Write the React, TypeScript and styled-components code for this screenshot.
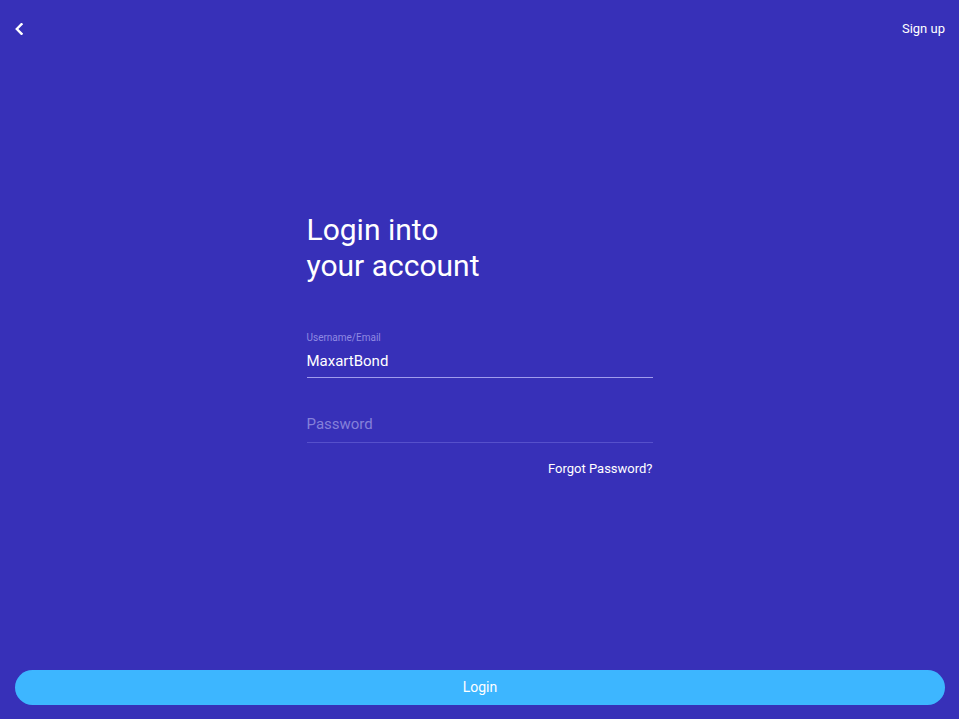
import React from "react";
import styled, { createGlobalStyle } from "styled-components";

const Global = createGlobalStyle`
  * { box-sizing: border-box; }
  html, body { margin: 0; padding: 0; height: 100%; }
  body {
    background: #3730b8;
    font-family: Roboto, "Liberation Sans", Arial, sans-serif;
    color: #ffffff;
  }
  #root { min-height: 100vh; }
`;

const Page = styled.div`
  min-height: 100vh;
  display: flex;
  flex-direction: column;
  background: #3730b8;
`;

const Header = styled.header`
  height: 57px;
  display: flex;
  align-items: center;
  justify-content: space-between;
  padding: 0 14px 0 15px;
`;

const BackButton = styled.button`
  display: flex;
  align-items: center;
  justify-content: center;
  padding: 0;
  margin: 0;
  border: none;
  background: transparent;
  color: #ffffff;
  cursor: pointer;
  width: 8px;
  height: 12px;
`;

const HeaderLink = styled.a`
  font-size: 13px;
  line-height: 16px;
  color: #ffffff;
  text-decoration: none;
`;

const Main = styled.main`
  flex: 1;
  display: flex;
  justify-content: center;
  padding-top: 155px;
`;

const Form = styled.form`
  width: 346px;
  display: flex;
  flex-direction: column;
`;

const Title = styled.h1`
  margin: 0 0 48px;
  font-size: 30px;
  line-height: 36px;
  font-weight: 400;
  color: #ffffff;
`;

const Field = styled.label<{ $gap: number }>`
  display: flex;
  flex-direction: column;
  margin-top: ${(p) => p.$gap}px;
`;

const FieldLabel = styled.span`
  font-size: 10px;
  line-height: 12px;
  color: #8f8ae2;
  margin-bottom: 8px;
`;

const Input = styled.input<{ $active?: boolean; $pb: number }>`
  font-family: inherit;
  font-size: 15px;
  line-height: 18px;
  height: ${(p) => 18 + p.$pb + 1}px;
  padding: 0 0 ${(p) => p.$pb}px;
  margin: 0;
  border: none;
  border-bottom: 1px solid ${(p) => (p.$active ? "#a09ced" : "#5650cb")};
  background: transparent;
  color: #ffffff;
  outline: none;
  &::placeholder {
    color: #8580da;
  }
`;

const Forgot = styled.a`
  align-self: flex-end;
  margin-top: 18px;
  font-size: 13px;
  line-height: 16px;
  color: #ffffff;
  text-decoration: none;
`;

const Footer = styled.footer`
  padding: 0 14px 14px 15px;
`;

const PrimaryButton = styled.button`
  width: 100%;
  height: 35px;
  border: none;
  border-radius: 18px;
  background: #3db6ff;
  color: #ffffff;
  font-family: inherit;
  font-size: 14px;
  line-height: 16px;
  padding: 0 0 1px;
  cursor: pointer;
`;

export default function App() {
  return (
    <>
      <Global />
      <Page>
        <Header>
          <BackButton aria-label="Back">
            <svg width="8" height="12" viewBox="0 0 8 12" fill="none">
              <polyline
                points="6.5,1.2 1.8,6 6.5,10.8"
                stroke="#ffffff"
                strokeWidth="2.4"
                strokeLinecap="square"
                strokeLinejoin="miter"
              />
            </svg>
          </BackButton>
          <HeaderLink href="#">Sign up</HeaderLink>
        </Header>
        <Main>
          <Form onSubmit={(e) => e.preventDefault()}>
            <Title>
              Login into
              <br />
              your account
            </Title>
            <Field $gap={0}>
              <FieldLabel>Username/Email</FieldLabel>
              <Input $active $pb={7} defaultValue="MaxartBond" />
            </Field>
            <Field $gap={37}>
              <Input $pb={9} type="password" placeholder="Password" />
            </Field>
            <Forgot href="#">Forgot Password?</Forgot>
          </Form>
        </Main>
        <Footer>
          <PrimaryButton>Login</PrimaryButton>
        </Footer>
      </Page>
    </>
  );
}
